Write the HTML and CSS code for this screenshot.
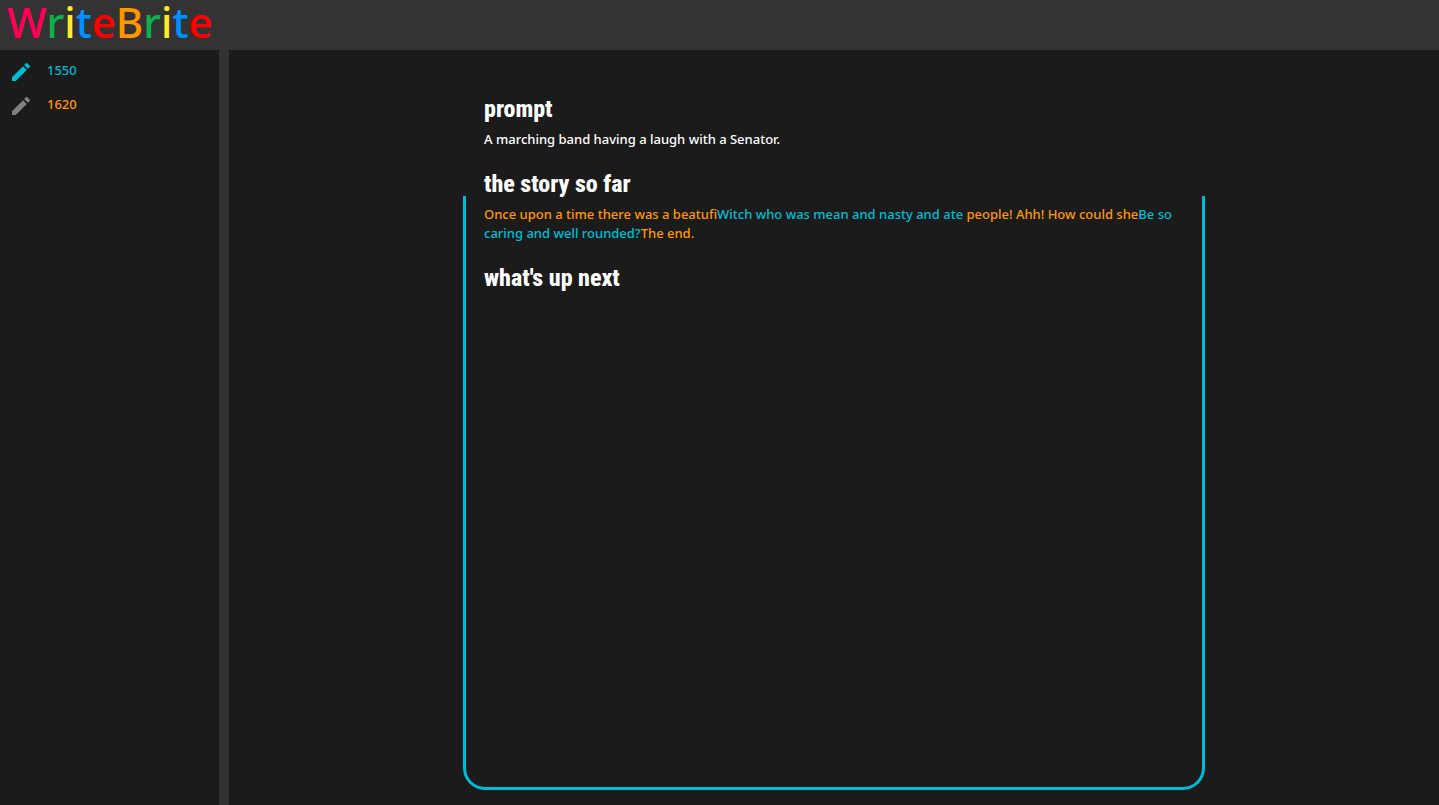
FILE: index.html
```html
<!DOCTYPE html>
<html lang="en">
<head>
<meta charset="utf-8">
<title>WriteBrite</title>
<link rel="stylesheet" href="styles.css">
</head>
<body>
<header class="topbar">
  <a class="logo" href="#"><span class="pink">W</span><span class="green">r</span><span class="yellow">i</span><span class="blue">t</span><span class="red">e</span><span class="amber">B</span><span class="green">r</span><span class="yellow">i</span><span class="blue">t</span><span class="red">e</span></a>
</header>
<div class="layout">
  <aside class="sidebar">
    <ul class="writers">
      <li class="writer active">
        <svg class="pencil" viewBox="3 3 18 18" aria-hidden="true"><path d="M3 17.25V21h3.75L17.81 9.94l-3.75-3.75L3 17.25zM20.71 7.04a1 1 0 0 0 0-1.41l-2.34-2.34a1 1 0 0 0-1.41 0l-1.83 1.83 3.75 3.75 1.83-1.83z"/></svg>
        <span class="cyan">1550</span>
      </li>
      <li class="writer">
        <svg class="pencil" viewBox="3 3 18 18" aria-hidden="true"><path d="M3 17.25V21h3.75L17.81 9.94l-3.75-3.75L3 17.25zM20.71 7.04a1 1 0 0 0 0-1.41l-2.34-2.34a1 1 0 0 0-1.41 0l-1.83 1.83 3.75 3.75 1.83-1.83z"/></svg>
        <span class="orange">1620</span>
      </li>
    </ul>
  </aside>
  <main class="content">
    <div class="page">
      <h2 class="heading">prompt</h2>
      <p class="text">A marching band having a laugh with a Senator.</p>
      <h2 class="heading">the story so far</h2>
      <div class="frame">
        <p class="text"><span class="orange">Once upon a time there was a beatufi</span><span class="cyan">Witch who was mean and nasty and ate </span><span class="orange">people! Ahh! How could she</span><span class="cyan">Be so caring and well rounded?</span><span class="orange">The end.</span></p>
        <h2 class="heading">what's up next</h2>
      </div>
    </div>
  </main>
</div>
</body>
</html>
```
FILE: styles.css
```css
* { box-sizing: border-box; }

body {
  display: flex;
  flex-direction: column;
  min-height: 100vh;
  margin: 0;
  background: #1b1b1b;
  color: #fff;
  font: 500 13px/19px "Noto Sans", "Open Sans", sans-serif;
}

.topbar {
  height: 50px;
  padding-left: 7px;
  background: #333;
}

.logo {
  display: flex;
  font: 500 42px/44px "Noto Sans", "Open Sans", sans-serif;
  text-decoration: none;
}

.pink { color: #ff0055; }
.green { color: #0db14b; }
.yellow { color: #ffed23; }
.blue { color: #0090ff; }
.red { color: #ff0000; }
.amber { color: #ff9500; }
.cyan { color: #00bcd4; }
.orange { color: #ff9800; }

.layout {
  display: flex;
  flex: 1;
}

.sidebar {
  width: 229px;
  border-right: 10px solid #333;
}

.writers {
  display: flex;
  flex-direction: column;
  gap: 14px;
  margin: 0;
  padding: 11px 12px;
  list-style: none;
}

.writer {
  display: flex;
  gap: 17px;
}

.pencil {
  width: 18px;
  height: 18px;
  margin-top: 2px;
  fill: #808080;
}

.active .pencil { fill: #00bcd4; }

.content {
  display: flex;
  flex: 1;
  justify-content: center;
  padding: 47px 16px 15px;
}

.page {
  display: flex;
  flex-direction: column;
  width: 100%;
  max-width: 742px;
}

.heading {
  margin: 0;
  padding: 0 21px;
  font: 800 24px/24px "Roboto Condensed", "Liberation Sans Narrow", "Liberation Sans", sans-serif;
}

.text {
  margin: 0;
  padding: 9px 21px 23px;
}

.frame {
  flex: 1;
  border: solid #00bcd4;
  border-width: 0 3px 3px;
  border-radius: 0 0 22px 22px;
}

.frame .heading,
.frame .text {
  padding-right: 18px;
  padding-left: 18px;
}
```
